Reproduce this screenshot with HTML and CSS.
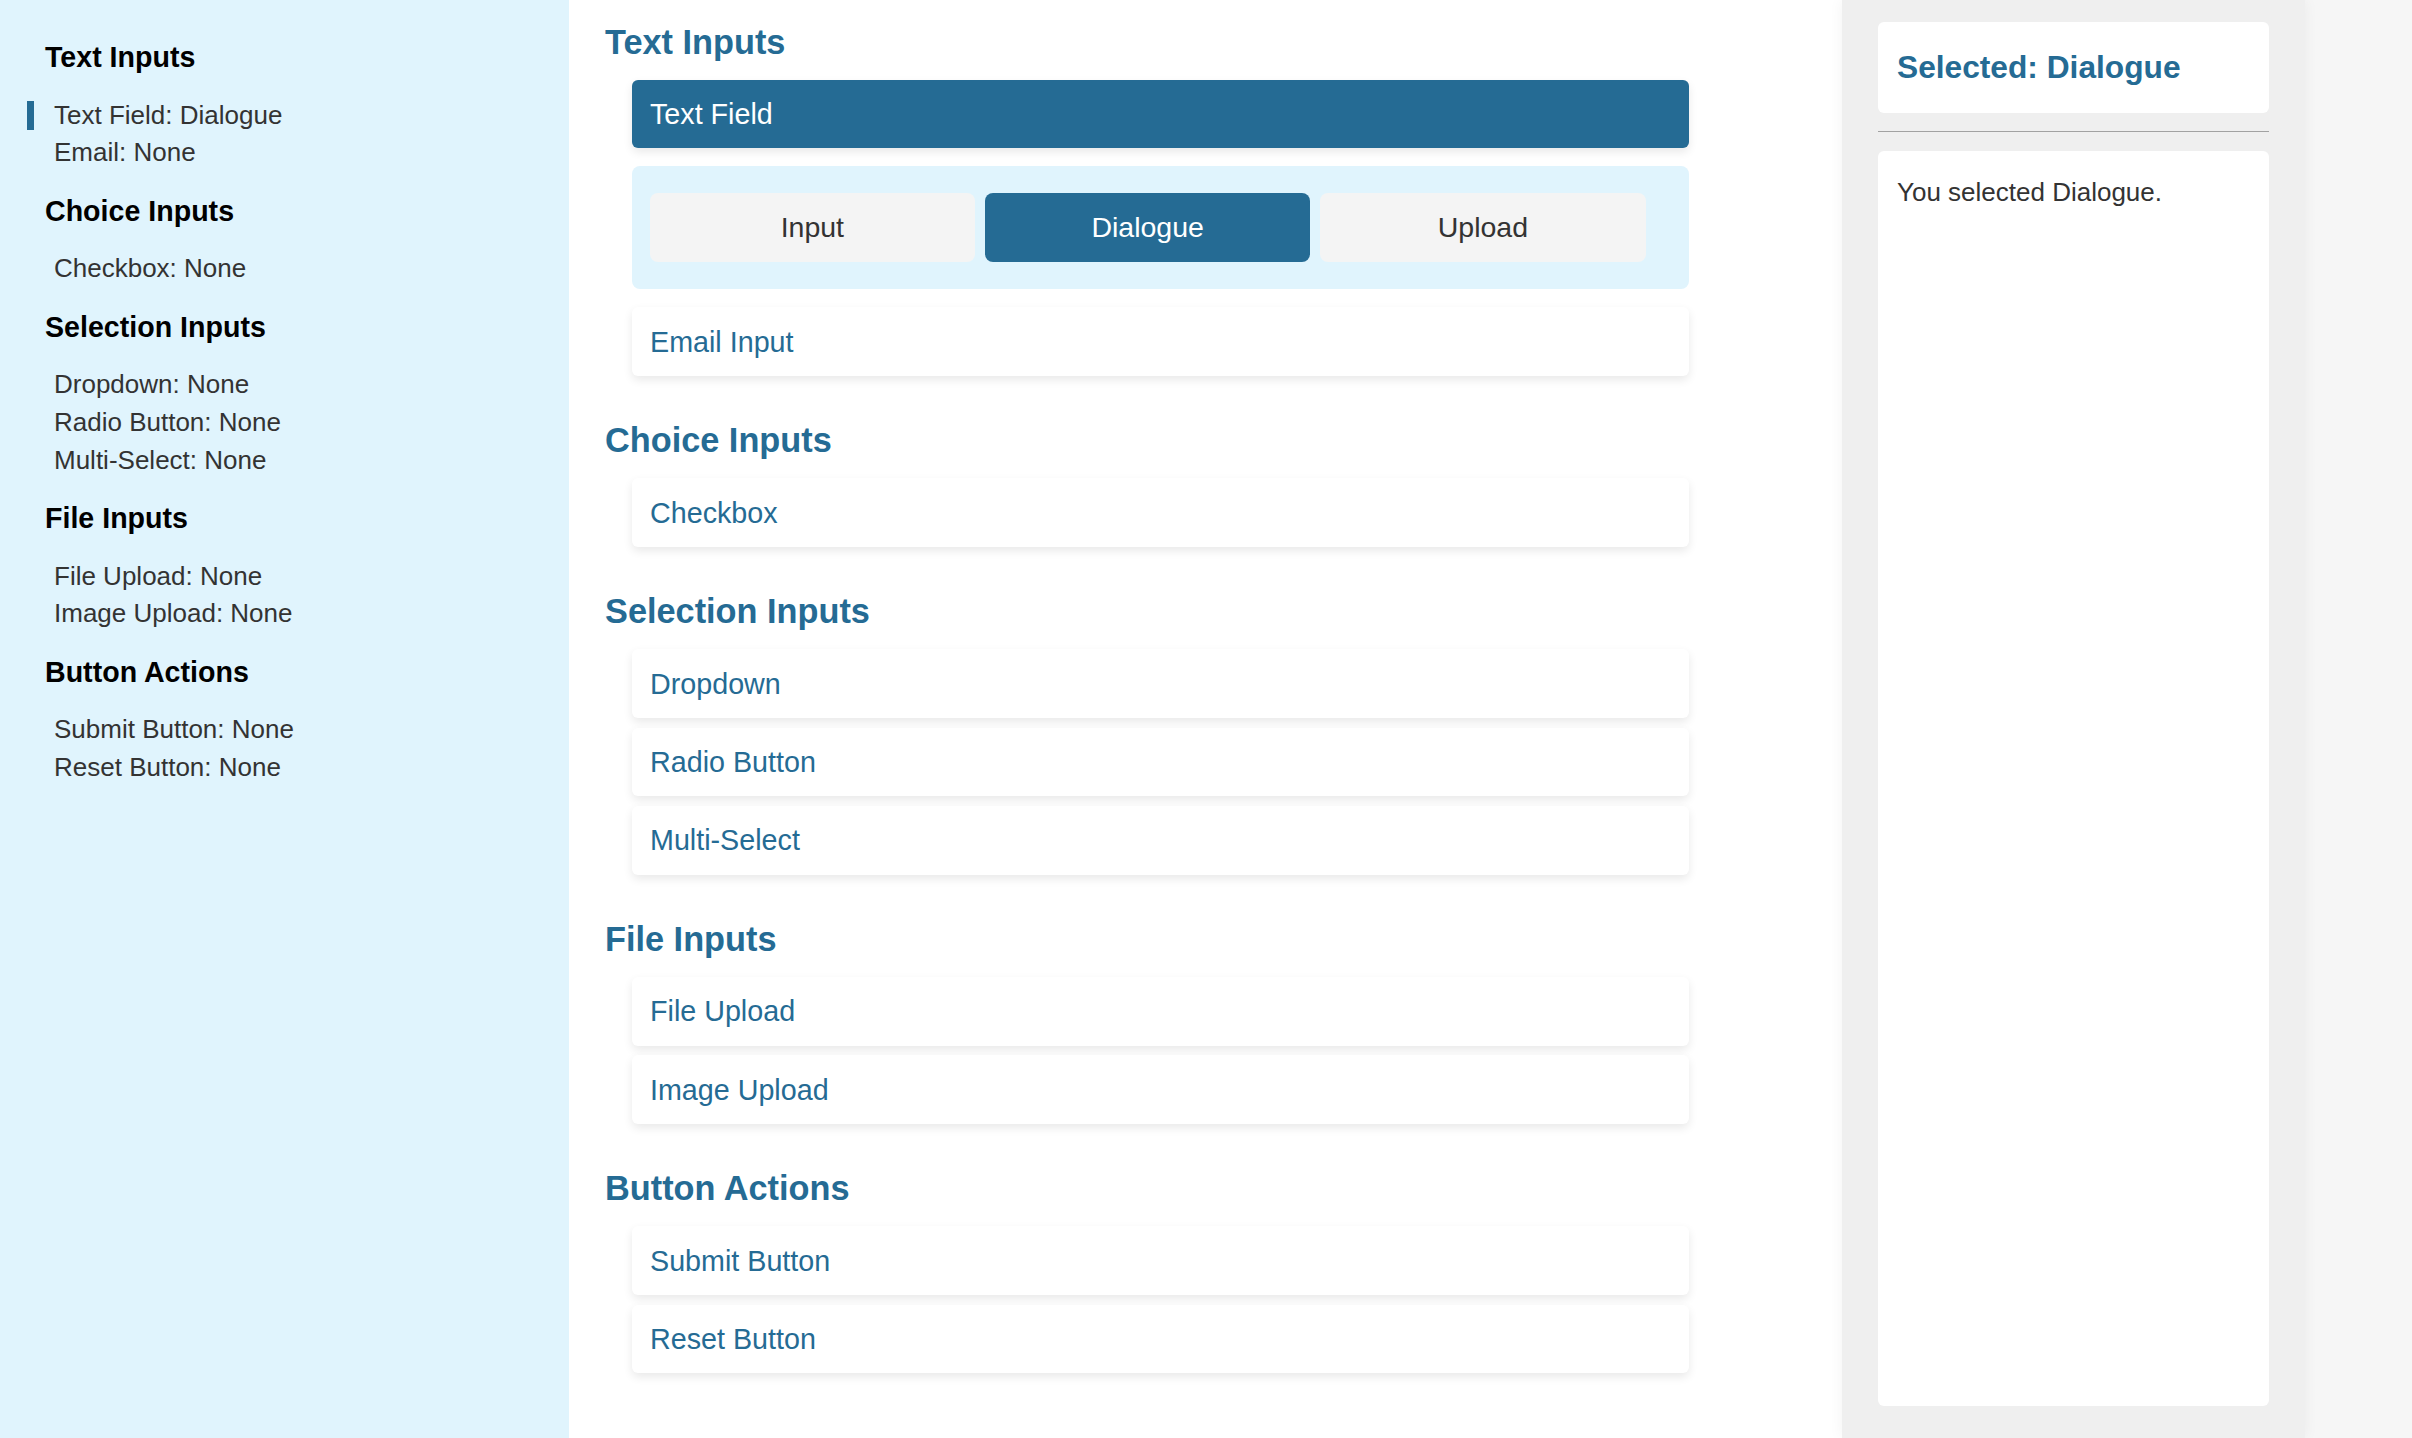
FILE: index.html
```html
<!DOCTYPE html>
<html lang="en">
<head>
<meta charset="utf-8">
<title>Input Types</title>
<link rel="stylesheet" href="styles.css">
</head>
<body>
<div class="app">
  <aside class="sidebar">
    <h3 class="side-title">Text Inputs</h3>
    <ul class="side-list">
      <li class="side-item active">Text Field: Dialogue</li>
      <li class="side-item">Email: None</li>
    </ul>
    <h3 class="side-title">Choice Inputs</h3>
    <ul class="side-list">
      <li class="side-item">Checkbox: None</li>
    </ul>
    <h3 class="side-title">Selection Inputs</h3>
    <ul class="side-list">
      <li class="side-item">Dropdown: None</li>
      <li class="side-item">Radio Button: None</li>
      <li class="side-item">Multi-Select: None</li>
    </ul>
    <h3 class="side-title">File Inputs</h3>
    <ul class="side-list">
      <li class="side-item">File Upload: None</li>
      <li class="side-item">Image Upload: None</li>
    </ul>
    <h3 class="side-title">Button Actions</h3>
    <ul class="side-list">
      <li class="side-item">Submit Button: None</li>
      <li class="side-item">Reset Button: None</li>
    </ul>
  </aside>

  <main class="main">
    <section class="section">
      <h2 class="section-title">Text Inputs</h2>
      <div class="cards">
        <div class="card selected">Text Field</div>
        <div class="options">
          <div class="tab">Input</div>
          <div class="tab active">Dialogue</div>
          <div class="tab">Upload</div>
        </div>
        <div class="card">Email Input</div>
      </div>
    </section>
    <section class="section">
      <h2 class="section-title">Choice Inputs</h2>
      <div class="cards">
        <div class="card">Checkbox</div>
      </div>
    </section>
    <section class="section">
      <h2 class="section-title">Selection Inputs</h2>
      <div class="cards">
        <div class="card">Dropdown</div>
        <div class="card">Radio Button</div>
        <div class="card">Multi-Select</div>
      </div>
    </section>
    <section class="section">
      <h2 class="section-title">File Inputs</h2>
      <div class="cards">
        <div class="card">File Upload</div>
        <div class="card">Image Upload</div>
      </div>
    </section>
    <section class="section">
      <h2 class="section-title">Button Actions</h2>
      <div class="cards">
        <div class="card">Submit Button</div>
        <div class="card">Reset Button</div>
      </div>
    </section>
  </main>

  <aside class="details">
    <div class="detail-card head">
      <h2 class="detail-title">Selected: Dialogue</h2>
    </div>
    <hr class="divider">
    <div class="detail-card body">
      <p class="detail-text">You selected Dialogue.</p>
    </div>
  </aside>
</div>
</body>
</html>
```

FILE: styles.css
```css
* {
  box-sizing: border-box;
}

html, body {
  margin: 0;
  padding: 0;
}

body {
  font-family: "Liberation Sans", Arial, Helvetica, sans-serif;
  background: #f6f6f6;
  color: #333;
}

.app {
  display: flex;
  min-height: 100vh;
  width: 2305px;
}

/* Sidebar */
.sidebar {
  width: 569px;
  flex: 0 0 569px;
  background: #e0f4fd;
  padding: 41px 0 0 27px;
  display: flex;
  flex-direction: column;
  gap: 27.5px;
}

.side-title {
  margin: 0 0 0 18px;
  font-size: 28.6px;
  line-height: 32px;
  font-weight: bold;
  color: #000;
}

.side-list {
  list-style: none;
  margin: 0;
  padding: 0;
  display: flex;
  flex-direction: column;
  gap: 8.7px;
}

.side-item {
  font-size: 26px;
  line-height: 29px;
  color: #333;
  border-left: 7px solid transparent;
  padding-left: 20px;
}

.side-item.active {
  border-left-color: #256b94;
}

/* Main */
.main {
  width: 1273px;
  flex: 0 0 1273px;
  background: #fff;
  padding: 22.6px 36px 40px 36px;
  display: flex;
  flex-direction: column;
  gap: 45.3px;
}

.section {
  display: flex;
  flex-direction: column;
  gap: 18.5px;
}

.section-title {
  margin: 0;
  font-size: 34.3px;
  line-height: 38.5px;
  font-weight: bold;
  color: #256b94;
}

.cards {
  margin-left: 27px;
  width: 1056.5px;
  display: flex;
  flex-direction: column;
  gap: 9.8px;
}

.card {
  background: #fff;
  border-radius: 6px;
  padding: 18.3px 18px;
  font-size: 28.7px;
  line-height: 32px;
  color: #256b94;
  box-shadow: 0 4px 10px rgba(0, 0, 0, 0.09);
}

.card.selected {
  background: #256b94;
  color: #fff;
}

.options {
  margin: 8.5px 0;
  background: #e0f4fd;
  border-radius: 8px;
  padding: 27px 17.5px;
  display: flex;
  gap: 9.6px;
}

.tab {
  width: 325.7px;
  height: 68.7px;
  display: flex;
  align-items: center;
  justify-content: center;
  background: #f4f4f4;
  border-radius: 8px;
  font-size: 28.5px;
  color: #333;
}

.tab.active {
  background: #256b94;
  color: #fff;
}

/* Details panel */
.details {
  width: 463px;
  flex: 0 0 463px;
  background: #efefef;
  padding: 22px 36.5px 32px 36px;
  display: flex;
  flex-direction: column;
  box-shadow: 0 0 14px rgba(0, 0, 0, 0.05);
}

.detail-card {
  background: #fff;
  border-radius: 6px;
  padding: 27px 19px;
}

.detail-card.body {
  flex: 1;
}

.detail-title {
  margin: 0;
  font-size: 31.7px;
  line-height: 36.5px;
  font-weight: bold;
  color: #256b94;
}

.divider {
  margin: 18.3px 0 19px;
  border: 0;
  border-top: 1.5px solid #a2a2a2;
  height: 0;
}

.detail-text {
  margin: 0;
  font-size: 26px;
  line-height: 29px;
  color: #333;
}
```
